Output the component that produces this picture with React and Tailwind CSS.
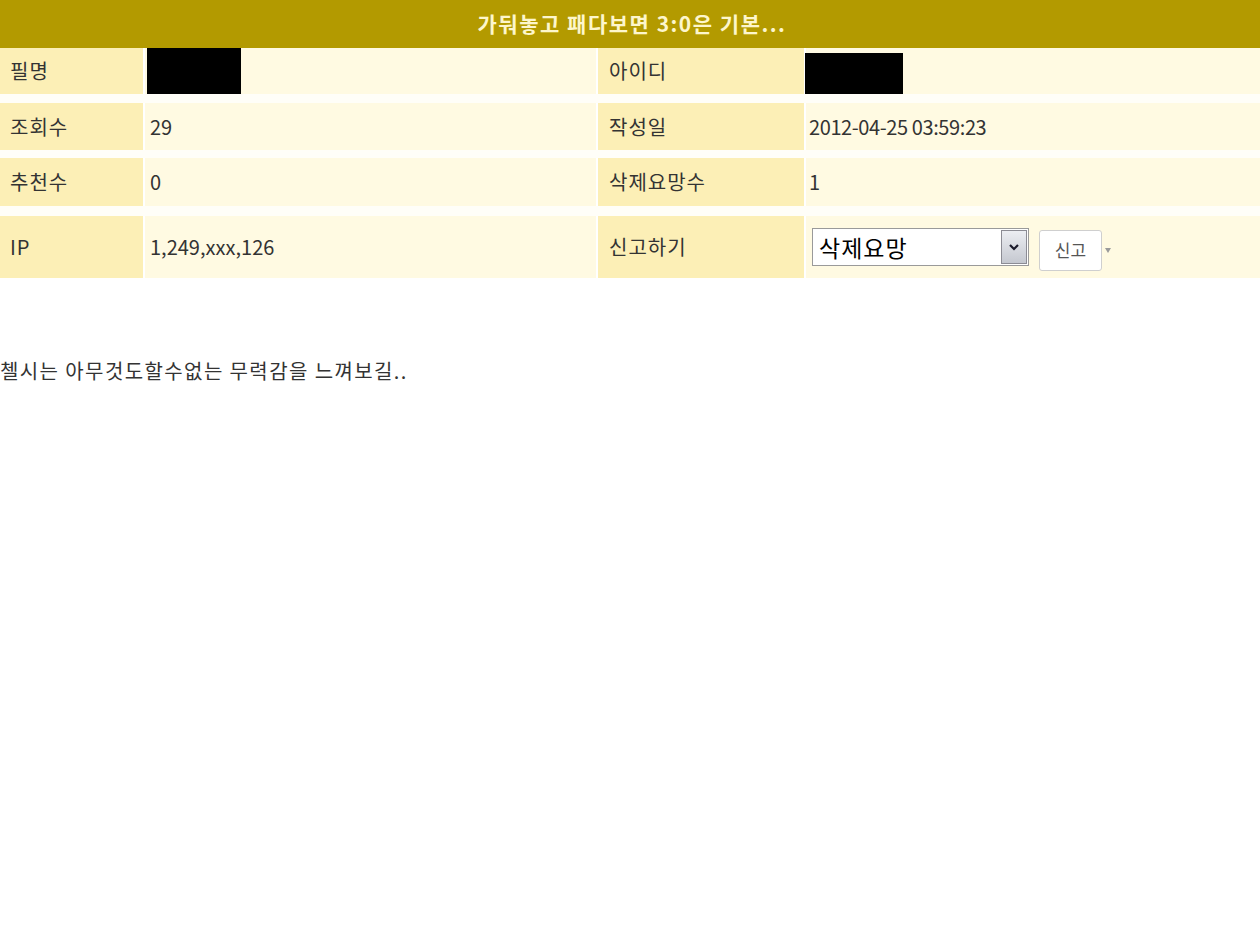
const FONT = { fontFamily: '"Noto Sans CJK KR", "Noto Sans", sans-serif' };

function Row({ h, label1, value1, label2, value2 }) {
  return (
    <div className={`flex gap-[2px] ${h}`}>
      <div className="w-[143px] shrink-0 bg-[#fcefb6] flex items-center pl-[10px] tracking-[1px]">{label1}</div>
      <div className="w-[451px] shrink-0 bg-[#fffae2] flex items-center pl-[5px]">{value1}</div>
      <div className="w-[206px] shrink-0 bg-[#fcefb6] flex items-center pl-[11px] tracking-[1px]">{label2}</div>
      <div className="flex-1 bg-[#fffae2] flex items-center pl-[3px]">{value2}</div>
    </div>
  );
}

function ReportControl() {
  return (
    <div className="flex items-center">
      <div className="ml-[3px] w-[217px] h-[38px] bg-white border border-[#9a9a9a] flex items-center">
        <span className="flex-1 pl-[6px] text-[23px] tracking-[1px] text-black leading-none">삭제요망</span>
        <span className="w-[26px] h-[34px] mr-[1px] border border-[#8c8c94] bg-gradient-to-b from-[#eceef2] to-[#c5c8d0] flex items-center justify-center">
          <svg width="10" height="8" viewBox="0 0 10 8">
            <path d="M1 2 L5 6 L9 2" stroke="#1a1a2a" strokeWidth="2.2" fill="none" />
          </svg>
        </span>
      </div>
      <div className="ml-[10px] mt-[6px] w-[63px] h-[41px] bg-white border border-[#cfcfcf] rounded-[3px] flex items-center justify-center text-[17px] text-[#555]">
        신고
      </div>
      <svg className="ml-[3px] mt-[6px]" width="6" height="5" viewBox="0 0 6 5">
        <path d="M0 0 L6 0 L3 5 Z" fill="#9a9a9a" />
      </svg>
    </div>
  );
}

export default function App() {
  return (
    <div className="w-[1260px] h-[945px] bg-white text-[#333] text-[20px] overflow-hidden" style={FONT}>
      <div className="h-[48px] bg-[#b39a00] flex items-center justify-center text-[21px] tracking-[1.5px] font-bold text-[#fdf6cc] pl-[4px]">
        가둬놓고 패다보면 3:0은 기본...
      </div>

      <div className="flex flex-col">
        <Row
          h="h-[46px]"
          label1="필명"
          value1={<div className="w-[94px] h-[46px] bg-black -ml-[3px]" />}
          label2="아이디"
          value2={<div className="w-[98px] h-[41px] mt-[5px] bg-black -ml-[4px]" />}
        />
        <div className="h-[9px] bg-[#fffef8]" />
        <Row h="h-[47px]" label1="조회수" value1="29" label2="작성일" value2={<span className="tracking-[-0.4px]">2012-04-25 03:59:23</span>} />
        <div className="h-[8px] bg-[#fffef8]" />
        <Row h="h-[48px]" label1="추천수" value1="0" label2="삭제요망수" value2="1" />
        <div className="h-[10px] bg-[#fffef8]" />
        <Row h="h-[62px]" label1="IP" value1="1,249,xxx,126" label2="신고하기" value2={<ReportControl />} />
      </div>

      <p className="mt-[78px] text-[20px] text-[#333] tracking-[1.4px]">
        첼시는 아무것도할수없는 무력감을 느껴보길..
      </p>
    </div>
  );
}
